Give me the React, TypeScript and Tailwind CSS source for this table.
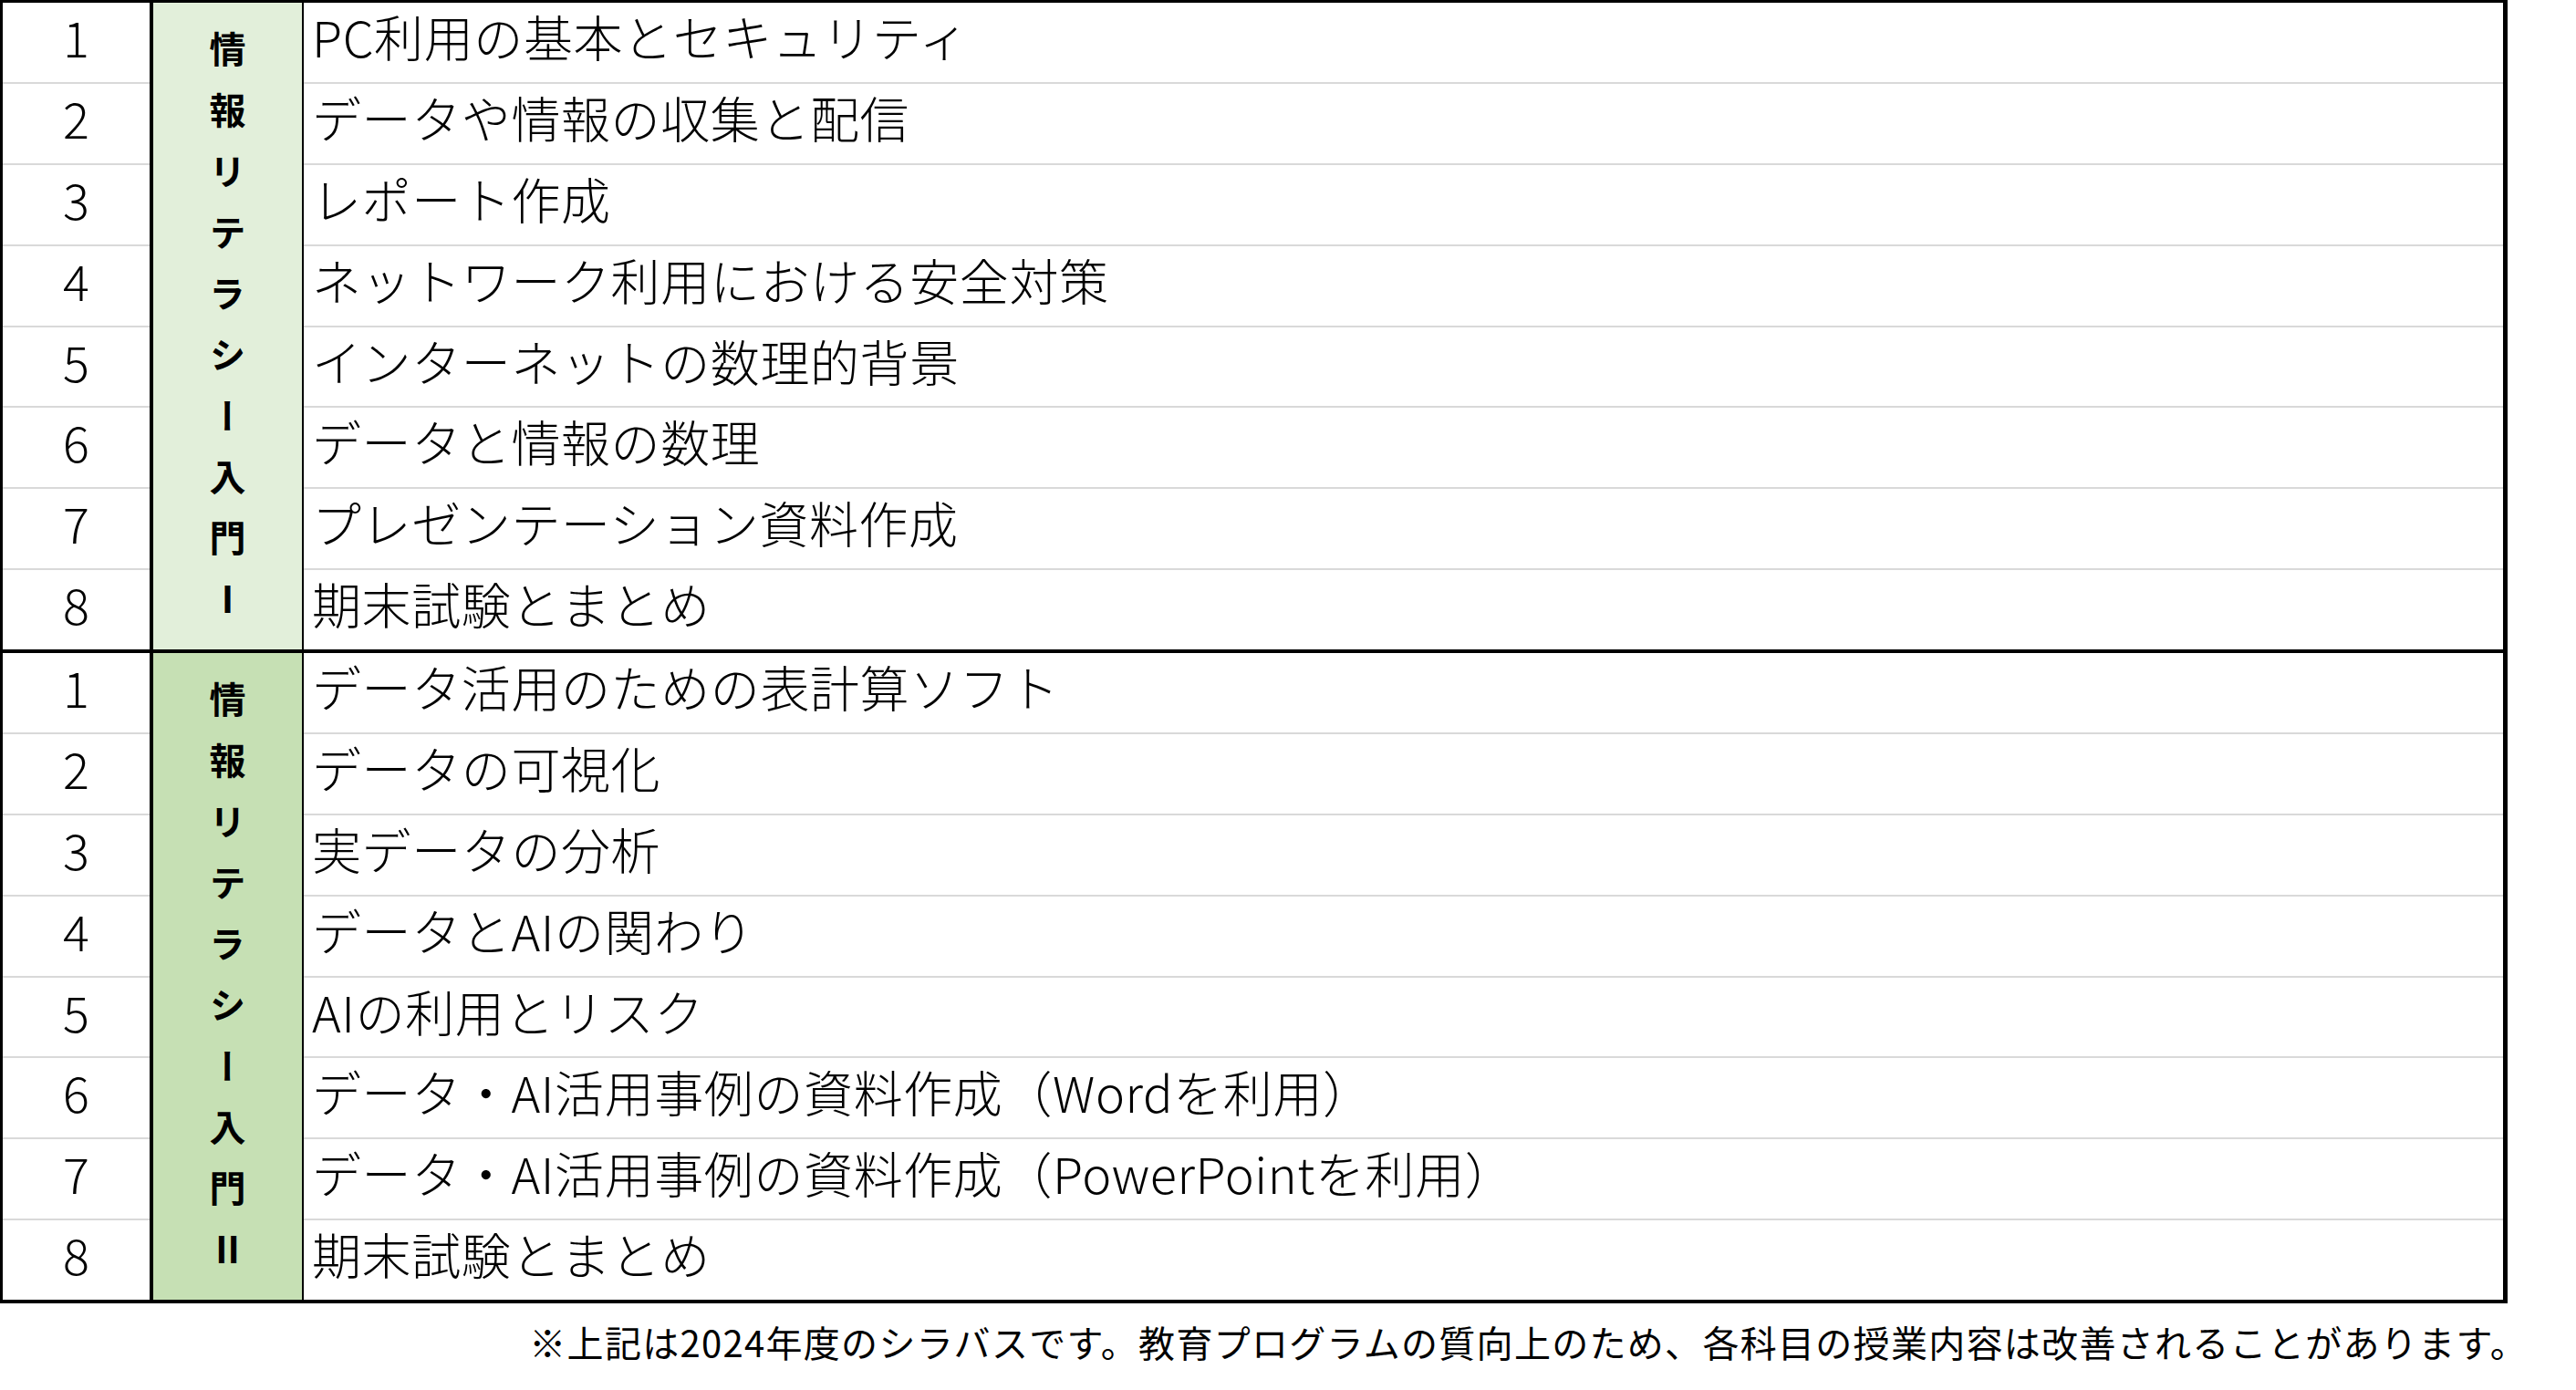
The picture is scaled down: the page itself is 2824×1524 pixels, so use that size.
const sections = [
  {
    label: '情報リテラシー入門Ⅰ',
    bg: 'bg-[#e2efda]',
    rows: [
      'PC利用の基本とセキュリティ',
      'データや情報の収集と配信',
      'レポート作成',
      'ネットワーク利用における安全対策',
      'インターネットの数理的背景',
      'データと情報の数理',
      'プレゼンテーション資料作成',
      '期末試験とまとめ',
    ],
  },
  {
    label: '情報リテラシー入門Ⅱ',
    bg: 'bg-[#c6e0b4]',
    rows: [
      'データ活用のための表計算ソフト',
      'データの可視化',
      '実データの分析',
      'データとAIの関わり',
      'AIの利用とリスク',
      'データ・AI活用事例の資料作成（Wordを利用）',
      'データ・AI活用事例の資料作成（PowerPointを利用）',
      '期末試験とまとめ',
    ],
  },
]

const font = "font-['Noto_Sans_CJK_JP','Noto_Sans',sans-serif]"

function Section({ label, bg, rows, last }: { label: string; bg: string; rows: string[]; last: boolean }) {
  return (
    <div className={`flex ${last ? 'h-[709px]' : 'h-[713px] border-b-4 border-black'}`}>
      {/* number column */}
      <div className="flex w-[165px] flex-col border-r-4 border-black">
        {rows.map((_, i) => (
          <div
            key={i}
            className={`flex min-h-0 flex-1 items-center justify-center pb-[12px] text-[54px] leading-[1.2] font-light ${
              i < rows.length - 1 ? 'border-b-2 border-[#d9d9d9]' : ''
            }`}
          >
            {i + 1}
          </div>
        ))}
      </div>

      {/* course label, merged cell */}
      <div className={`flex w-[165px] flex-col items-center justify-center border-r-2 border-black pb-[5px] ${bg}`}>
        {Array.from(label).map((ch, i) => (
          <div key={i} className="flex h-[67px] items-center justify-center">
            <span className="text-[40px] leading-none font-bold [writing-mode:vertical-rl]">{ch}</span>
          </div>
        ))}
      </div>

      {/* topics */}
      <div className="flex flex-1 flex-col">
        {rows.map((text, i) => (
          <div
            key={i}
            className={`flex min-h-0 flex-1 items-center pb-[12px] pl-[9px] text-[54px] leading-[1.2] font-light tracking-[0.6px] whitespace-nowrap ${
              i < rows.length - 1 ? 'border-b-2 border-[#d9d9d9]' : ''
            }`}
          >
            {text}
          </div>
        ))}
      </div>
    </div>
  )
}

export default function App() {
  return (
    <div className={`min-h-screen bg-white text-black ${font}`}>
      <div className="w-[2749px] border-t-[3px] border-r-[5px] border-b-4 border-l-[3px] border-black">
        {sections.map((s, i) => (
          <Section key={i} label={s.label} bg={s.bg} rows={s.rows} last={i === sections.length - 1} />
        ))}
      </div>
      <div className="mt-[18px] w-[2771px] text-right text-[40px] leading-[1.2] tracking-[1.3px]">
        ※上記は2024年度のシラバスです。教育プログラムの質向上のため、各科目の授業内容は改善されることがあります。
      </div>
    </div>
  )
}
